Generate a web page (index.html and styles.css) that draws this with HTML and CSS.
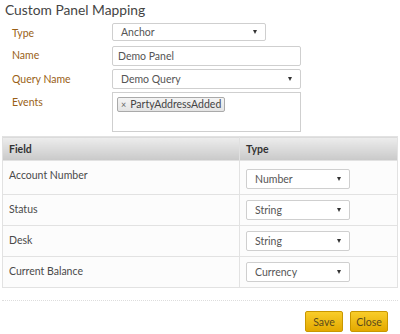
FILE: index.html
```html
<!DOCTYPE html>
<html lang="en">
<head>
  <meta charset="UTF-8" />
  <title>Custom Panel Mapping</title>
  <link rel="stylesheet" href="styles.css">
</head>
<body>
  <div class="dialog">
    <h3 class="title">Custom Panel Mapping</h3>

    <div class="form">
      <label class="lbl">Type</label>
      <div class="select short">Anchor<span class="caret"></span></div>

      <label class="lbl">Name</label>
      <div class="input">Demo Panel</div>

      <label class="lbl">Query Name</label>
      <div class="select">Demo Query<span class="caret"></span></div>

      <label class="lbl">Events</label>
      <div class="tags">
        <span class="tag"><span class="x">&times;</span>PartyAddressAdded</span>
      </div>
    </div>

    <table class="grid">
      <thead>
        <tr>
          <th>Field</th>
          <th class="col-type">Type</th>
        </tr>
      </thead>
      <tbody>
        <tr>
          <td>Account Number</td>
          <td class="col-type"><div class="select cell">Number<span class="caret"></span></div></td>
        </tr>
        <tr>
          <td>Status</td>
          <td class="col-type"><div class="select cell">String<span class="caret"></span></div></td>
        </tr>
        <tr>
          <td>Desk</td>
          <td class="col-type"><div class="select cell">String<span class="caret"></span></div></td>
        </tr>
        <tr>
          <td>Current Balance</td>
          <td class="col-type"><div class="select cell">Currency<span class="caret"></span></div></td>
        </tr>
      </tbody>
    </table>

    <div class="footer">
      <button class="btn">Save</button>
      <button class="btn">Close</button>
    </div>
  </div>
</body>
</html>
```

FILE: styles.css
```css
body {
  margin: 0;
  padding: 0;
  background: #fff;
  font-family: Lato, "Open Sans", Arial, sans-serif;
  font-size: 10.5px;
  color: #4a4a4a;
}
.dialog {
  width: 400px;
  height: 334px;
  overflow: hidden;
}
.title {
  margin: 0;
  padding: 1px 0 0 5px;
  font-size: 13.8px;
  font-weight: normal;
  color: #444;
  height: 22px;
}
.form {
  display: grid;
  grid-template-columns: 100px 189px;
  row-gap: 3px;
  padding-left: 12px;
}
.lbl {
  color: #9a5f16;
  line-height: 18px;
  padding-top: 1px;
}
.select,
.input {
  position: relative;
  box-sizing: border-box;
  height: 20px;
  border: 1px solid #cfcfcf;
  border-radius: 2px;
  padding: 0 8px;
  line-height: 18px;
  color: #555;
  background: #fff;
}
.input {
  padding-left: 5px;
  margin-top: 1px;
}
.select.short {
  width: 154px;
  height: 18px;
  line-height: 16px;
}
.caret {
  position: absolute;
  right: 8px;
  top: 7px;
  width: 0;
  height: 0;
  border-left: 2.5px solid transparent;
  border-right: 2.5px solid transparent;
  border-top: 4px solid #333;
}
.short .caret {
  top: 6px;
}
.tags {
  box-sizing: border-box;
  height: 40px;
  border: 1px solid #cfcfcf;
  padding: 4px;
}
.tag {
  display: inline-block;
  height: 13px;
  line-height: 12px;
  padding: 0 3px;
  border: 1px solid #aaa;
  border-radius: 2px;
  background: linear-gradient(#f4f4f4, #e4e4e4);
  color: #444;
}
.tag .x {
  font-size: 9px;
  color: #666;
  margin-right: 4px;
}
.grid {
  width: 396px;
  margin: 4px 0 0 2px;
  border-collapse: collapse;
  border: 1px solid #e2e2e2;
}
.grid th {
  height: 23px;
  padding: 0 6px;
  text-align: left;
  color: #333;
  background: linear-gradient(#ededed, #c9c9c9);
  border-left: 1px solid #e0e0e0;
}
.grid td {
  vertical-align: top;
  padding: 8px 6px 0;
  height: 22px;
  border-top: 1px solid #e2e2e2;
  border-left: 1px solid #e2e2e2;
  background: #fcfcfc;
}
.grid tbody tr:first-child td {
  height: 25px;
}
.grid .col-type {
  width: 145px;
}
.grid td.col-type {
  padding-top: 5px;
}
.grid tbody tr:first-child td.col-type {
  padding-top: 8px;
}
.select.cell {
  width: 104px;
}
.footer {
  margin: 12px 2px 0;
  border-top: 1px dotted #ddd;
  padding: 10px 10px 0 0;
  display: flex;
  justify-content: flex-end;
  gap: 7px;
}
.btn {
  width: 38px;
  height: 21px;
  padding: 0;
  border: 1px solid #c99700;
  border-radius: 2px;
  background: linear-gradient(#f9cd2a, #e3a900);
  color: #5b4a1c;
  font-family: Lato, "Open Sans", Arial, sans-serif;
  font-size: 10.5px;
  cursor: pointer;
}
```
